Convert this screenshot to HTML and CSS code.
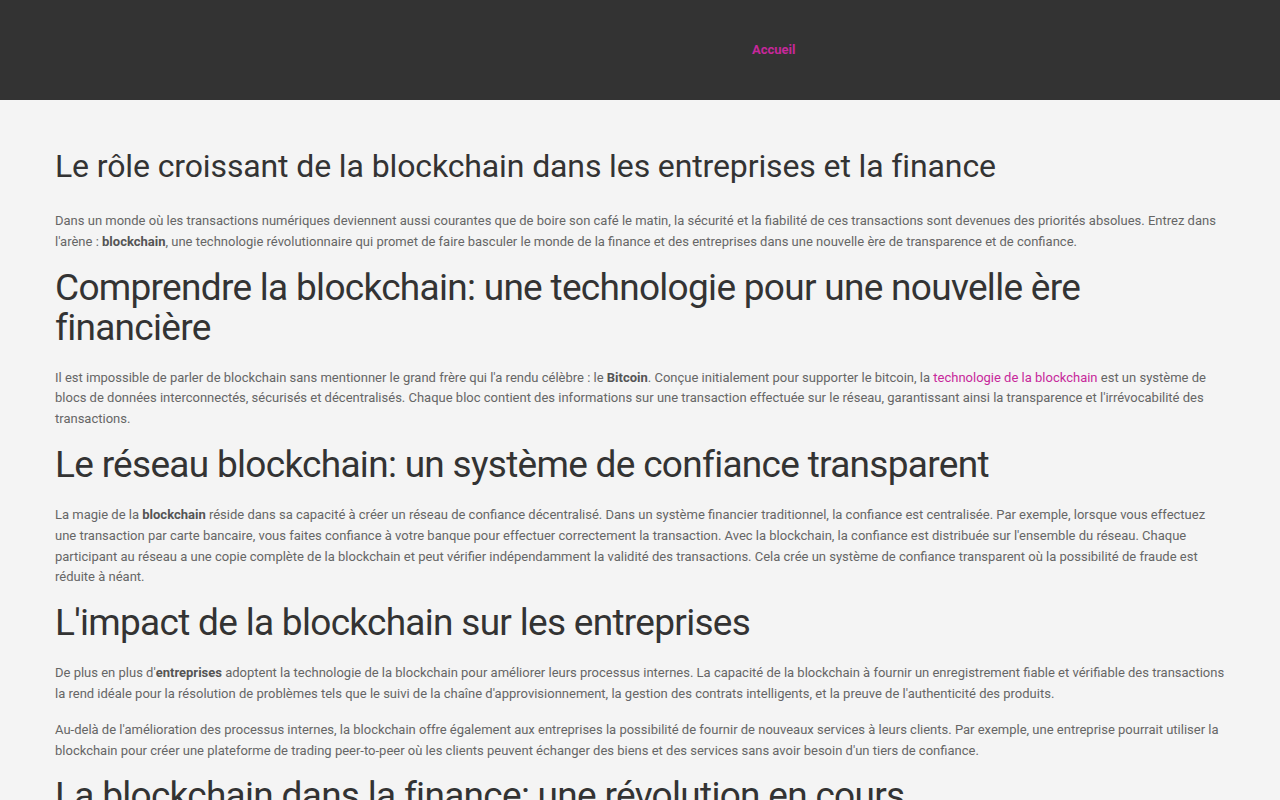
FILE: index.html
```html
<!DOCTYPE html>
<html lang="fr">
<head>
<meta charset="utf-8">
<title>Le rôle croissant de la blockchain dans les entreprises et la finance</title>
<link rel="stylesheet" href="styles.css">
</head>
<body>
<header class="site-header">
  <div class="header-inner">
    <div class="brand"></div>
    <nav class="main-nav">
      <a class="nav-link active" href="#">Accueil</a>
    </nav>
  </div>
</header>
<main class="content">
  <article class="article">
    <h1 class="title">Le rôle croissant de la blockchain dans les entreprises et la finance</h1>
    <p>Dans un monde où les transactions numériques deviennent aussi courantes que de boire son café le matin, la sécurité et la fiabilité de ces transactions sont devenues des priorités absolues. Entrez dans l'arène : <strong>blockchain</strong>, une technologie révolutionnaire qui promet de faire basculer le monde de la finance et des entreprises dans une nouvelle ère de transparence et de confiance.</p>
    <h2>Comprendre la blockchain: une technologie pour une nouvelle ère financière</h2>
    <p>Il est impossible de parler de blockchain sans mentionner le grand frère qui l'a rendu célèbre : le <strong>Bitcoin</strong>. Conçue initialement pour supporter le bitcoin, la <a href="#">technologie de la blockchain</a> est un système de blocs de données interconnectés, sécurisés et décentralisés. Chaque bloc contient des informations sur une transaction effectuée sur le réseau, garantissant ainsi la transparence et l'irrévocabilité des transactions.</p>
    <h2>Le réseau blockchain: un système de confiance transparent</h2>
    <p>La magie de la <strong>blockchain</strong> réside dans sa capacité à créer un réseau de confiance décentralisé. Dans un système financier traditionnel, la confiance est centralisée. Par exemple, lorsque vous effectuez une transaction par carte bancaire, vous faites confiance à votre banque pour effectuer correctement la transaction. Avec la blockchain, la confiance est distribuée sur l'ensemble du réseau. Chaque participant au réseau a une copie complète de la blockchain et peut vérifier indépendamment la validité des transactions. Cela crée un système de confiance transparent où la possibilité de fraude est réduite à néant.</p>
    <h2>L'impact de la blockchain sur les entreprises</h2>
    <p>De plus en plus d'<strong>entreprises</strong> adoptent la technologie de la blockchain pour améliorer leurs processus internes. La capacité de la blockchain à fournir un enregistrement fiable et vérifiable des transactions la rend idéale pour la résolution de problèmes tels que le suivi de la chaîne d'approvisionnement, la gestion des contrats intelligents, et la preuve de l'authenticité des produits.</p>
    <p>Au-delà de l'amélioration des processus internes, la blockchain offre également aux entreprises la possibilité de fournir de nouveaux services à leurs clients. Par exemple, une entreprise pourrait utiliser la blockchain pour créer une plateforme de trading peer-to-peer où les clients peuvent échanger des biens et des services sans avoir besoin d'un tiers de confiance.</p>
    <h2>La blockchain dans la finance: une révolution en cours</h2>
    <p>La finance est sans doute le secteur où la blockchain a le plus grand potentiel de transformation.</p>
  </article>
</main>
</body>
</html>
```
FILE: styles.css
```css
html, body {
  margin: 0;
  padding: 0;
}
body {
  background: #f4f4f4;
  font-family: Roboto, "Liberation Sans", Arial, sans-serif;
  color: #666;
  font-size: 13px;
  line-height: 1.6;
}
.site-header {
  background: #333333;
  height: 100px;
}
.header-inner {
  width: 1170px;
  margin: 0 auto;
  height: 100%;
  display: flex;
  align-items: center;
}
.brand {
  width: 697px;
}
.main-nav {
  display: flex;
  gap: 20px;
}
.nav-link {
  color: #c7289b;
  font-weight: 700;
  font-size: 13px;
  text-decoration: none;
  line-height: 1;
  margin-top: -2px;
}
.content {
  width: 1170px;
  margin: 0 auto;
  padding-top: 46px;
}
.article h1 {
  font-size: 32px;
  font-weight: 400;
  color: #333;
  line-height: 40px;
  margin: 0 0 25px;
  letter-spacing: -0.12px;
}
.article h2 {
  font-size: 37px;
  font-weight: 400;
  color: #333;
  line-height: 40px;
  margin: 0 0 20px;
  letter-spacing: -0.7px;
}
.article p {
  margin: 0 0 15px;
}
.article strong {
  color: #555;
  font-weight: 700;
}
.article a {
  color: #c7289b;
  text-decoration: none;
}
```
